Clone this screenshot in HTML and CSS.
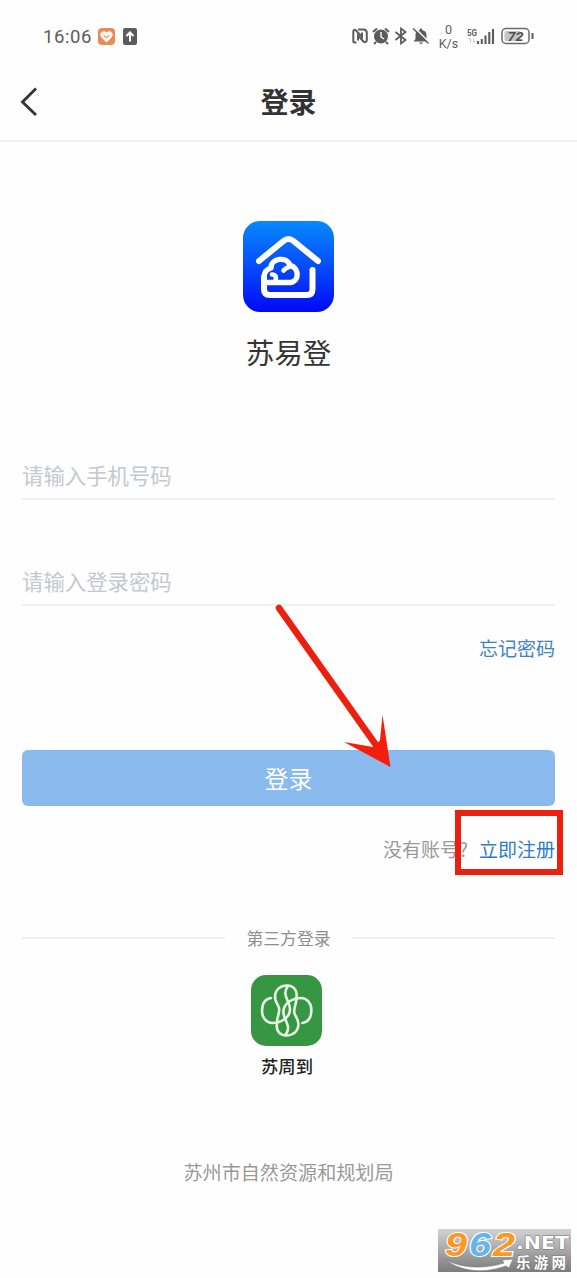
FILE: index.html
```html
<!DOCTYPE html>
<html lang="zh-CN">
<head>
<meta charset="utf-8">
<title>登录</title>
<link rel="stylesheet" href="styles.css">
</head>
<body>
<div class="screen">
  <div class="status">
    <span class="clock">16:06</span>
    <svg class="app-a" width="17" height="17" viewBox="0 0 17 17"><rect width="17" height="17" rx="4" fill="#e88b57"/><path d="M8.500 14.500 3.500 9.500C0 5.500 5 1.200 8.500 4.500 12 1.200 17 5.500 13.500 9.500Z" fill="#fff8ec"/><path d="m6 7.500 2.500 2.200L11 7.500" fill="none" stroke="#e8a070" stroke-width="1.200"/></svg>
    <svg class="app-b" width="14" height="17" viewBox="0 0 14 17"><rect width="14" height="17" rx="2" fill="#5c5c5c"/><path d="M7 13.500V4.500M3.500 8 7 4.500 10.500 8" fill="none" stroke="#fff" stroke-width="2"/></svg>
    <div class="indicators">
      <svg width="16" height="16" viewBox="0 0 16 16"><path d="M4.500 14.500H3C1.500 14.500 1.300 13.500 1.300 13V3.500C1.300 1.500 3 1.500 4 2.500L10 9V4.500" fill="none" stroke="#5c5c5c" stroke-width="2"/><path d="M6 1.500H11.500C14 1.500 14.800 3 14.800 5V12C14.800 14.500 12.500 14.500 11.500 13.500L6 7.500V12.500" fill="none" stroke="#5c5c5c" stroke-width="2"/></svg>
      <svg width="18" height="18" viewBox="0 0 18 18"><circle cx="9" cy="9.500" r="7" fill="#5c5c5c"/><path d="M1 5 5 1.500M17 5 13 1.500M4 15l-2 2M14 15l2 2" stroke="#5c5c5c" stroke-width="2"/><path d="M9 5v5l3 2" fill="none" stroke="#fff" stroke-width="1.400"/></svg>
      <svg width="14" height="18" viewBox="0 0 14 18"><path d="m1.500 5 10 8L7 16.500v-15L11.500 5l-10 8" fill="none" stroke="#5c5c5c" stroke-width="1.800"/></svg>
      <svg width="18" height="18" viewBox="0 0 18 18"><path d="M1.500 14.500 3.500 12V8c0-3 2-4.500 4.500-5V1.500h2V3c3 .5 4.500 2.500 4.500 5v4l2 2.500ZM7 15.500h4L9 17.500Z" fill="#5c5c5c"/><path d="m3 1 14 14" stroke="#fff" stroke-width="1.500"/><path d="m1 1.500 15.500 15" stroke="#5c5c5c" stroke-width="1.400"/></svg>
      <div class="speed"><span>0</span><span>K/s</span></div>
      <svg class="signal" width="29" height="19" viewBox="0 0 29 19"><text x="0" y="8.500" class="gen" textLength="10" lengthAdjust="spacingAndGlyphs">5G</text><path d="M3.500 11v5m-1.500-3 1.500-2M6.500 11v5l1.500-2" fill="none" stroke="#ccc"/><path d="M11 14v3M14.800 12v5M18.500 8.500v8.500M22.300 5v12M26 2v15" stroke="#5c5c5c" stroke-width="2.100"/></svg>
      <svg class="battery" width="34" height="18" viewBox="0 0 34 18"><rect x="1" y="1.500" width="27" height="15" rx="4" fill="#fff" stroke="#6a6a6a" stroke-width="1.500"/><rect x="3.500" y="4" width="16" height="10" rx="1.500" fill="#c5c5c5"/><path d="M31.500 6v6" stroke="#5c5c5c" stroke-width="2"/><text x="14.500" y="13.500" text-anchor="middle" class="level" textLength="16" lengthAdjust="spacingAndGlyphs">72</text></svg>
    </div>
  </div>

  <div class="nav">
    <svg class="back" width="18" height="30" viewBox="0 0 18 30"><path d="M16 2.500 2.500 16 16 29" fill="none" stroke="#333" stroke-width="2.800"/></svg>
    <h1 class="title">登录</h1>
  </div>

  <div class="brand">
    <svg width="91" height="91" viewBox="0 0 91 91">
      <defs><linearGradient id="blue" x2="0" y2="1"><stop stop-color="#0789fe"/><stop offset=".5" stop-color="#064cfb"/><stop offset="1" stop-color="#0208f4"/></linearGradient></defs>
      <rect width="91" height="91" rx="17" fill="url(#blue)"/>
      <g fill="none" stroke="#fff" stroke-width="6" stroke-linecap="round" stroke-linejoin="round">
        <path d="M16 40 40.500 20Q45.500 16 50.500 20L75 40"/>
        <path d="M69.500 49V68Q69.500 74 64 74H27Q21 74 21 68V56"/>
        <path d="M21 57C21 51 24 48 28 47 28 37 44 35 47 44.500 56 46 57 60 47.500 61.500H24" stroke-width="5.400"/>
        <path d="M29 53.500C33 53.500 34 57 32 60M40.500 49.500Q42.500 47 46 46" stroke-width="4.600"/>
      </g>
    </svg>
    <div class="brand-name">苏易登</div>
  </div>

  <div class="form">
    <div class="field phone">请输入手机号码</div>
    <div class="field password">请输入登录密码</div>
    <div class="forgot">忘记密码</div>
    <div class="submit">登录</div>
    <div class="register"><span class="ask">没有账号?</span><span class="link">立即注册</span></div>
    <div class="divider"><span>第三方登录</span></div>
  </div>

  <div class="partner">
    <svg width="71" height="71" viewBox="0 0 71 71">
      <defs>
        <g id="petal" fill="none" stroke="#e4f8e4" stroke-width="2.600" stroke-linecap="round">
          <path d="M20 23C14 24 11 29 11 36 11 43 16 48 21 48 31 48 39 42 39 34 39 26 30 20 37 11"/>
          <path d="M26 47C26 42 29 38 28 33 27 29 24 27 24 22 24 15 29 10.500 36 10.500 43 10.500 46.500 16 45.500 22"/>
        </g>
      </defs>
      <rect width="71" height="71" rx="15" fill="#369641"/>
      <use href="#petal"/>
      <use href="#petal" transform="rotate(180 35.700 35.500)"/>
    </svg>
    <div class="partner-name">苏周到</div>
  </div>
  <div class="owner">苏州市自然资源和规划局</div>

  <svg class="pointer" width="120" height="168" viewBox="0 0 120 168"><path d="m6 6 97 137" stroke="#ed2010" stroke-width="6.500" stroke-linecap="round"/><path d="M117.500 165 71 140 100 145 107 138.500 109.500 113Z" fill="#f51d0c"/></svg>
  <div class="highlight"></div>
  <div class="watermark">
    <svg width="133" height="43" viewBox="0 0 133 43">
      <defs><linearGradient id="gray" x2="0" y2="1"><stop stop-color="#d2d2d2"/><stop offset="1" stop-color="#7c7c7c"/></linearGradient></defs>
      <rect width="133" height="43" fill="url(#gray)"/>
      <g class="digits"><text x="7" y="27" textLength="22" lengthAdjust="spacingAndGlyphs" fill="#ff9720">9</text><text x="31" y="27" textLength="22" lengthAdjust="spacingAndGlyphs" fill="#63b6e9">6</text><text x="55" y="27" textLength="22" lengthAdjust="spacingAndGlyphs" fill="#ff9720">2</text></g>
      <text x="78" y="20" class="net" textLength="53" lengthAdjust="spacingAndGlyphs">.NET</text>
      <text x="78" y="38.500" class="site" textLength="50">乐游网</text>
      <path d="M7 30C24 40 46 40 66 34L64 31 75 30 71 39 68 37C46 45 22 43 7 30Z" fill="#fff" stroke="#777" stroke-width=".6"/>
    </svg>
  </div>
</div>
</body>
</html>
```
FILE: styles.css
```css
* { box-sizing: border-box; }
body {
  margin: 0;
  background: #fefefe;
  font-family: "Noto Sans CJK SC", sans-serif;
  color: #333;
}
.screen {
  position: relative;
  display: flex;
  flex-direction: column;
  width: 577px;
  height: 1278px;
  overflow: hidden;
}
svg { display: block; flex: none; overflow: visible; }

.status {
  display: flex;
  align-items: center;
  height: 72px;
  padding: 0 42px 0 43px;
  color: #5c5c5c;
}
.clock {
  width: 49px;
  font: 18.5px/24px Roboto, sans-serif;
  letter-spacing: 0.6px;
  padding-top: 1px;
}
.app-a { margin-left: 6px; }
.app-b { margin-left: 8px; }
.indicators {
  display: flex;
  align-items: center;
  gap: 4px;
  margin-left: auto;
}
.speed {
  display: flex;
  flex-direction: column;
  align-items: center;
  width: 23px;
  margin-left: 3px;
  padding-top: 1px;
  font: 12.5px/14px Roboto, sans-serif;
}
.signal { margin-left: 3px; }
.gen { font: bold 9px Roboto, sans-serif; fill: #5c5c5c; }
.level { font: italic bold 13px Roboto, sans-serif; fill: #505050; }
.battery { margin-left: 1px; }

.nav {
  display: grid;
  grid-template-columns: 40px 1fr 40px;
  align-items: center;
  height: 70px;
  padding: 0 20px 10px;
  border-bottom: 2px solid #f1f1f1;
}
.title {
  margin: 0;
  text-align: center;
  font-size: 28px;
  line-height: 40px;
  font-weight: 700;
}

.brand {
  display: flex;
  flex-direction: column;
  align-items: center;
  padding-top: 79px;
}
.brand-name {
  margin-top: 19px;
  font-size: 28.5px;
  line-height: 42px;
}

.form { padding: 0 22px; }
.field {
  color: #c3c9cf;
  font-size: 21.4px;
  line-height: 32px;
  border-bottom: 2px solid #f0f0f0;
}
.phone { height: 41px; margin-top: 86px; }
.password { height: 41px; margin-top: 65px; }
.forgot {
  margin-top: 28px;
  text-align: right;
  color: #4083c6;
  font-size: 19px;
  line-height: 28px;
}
.submit {
  height: 56px;
  margin-top: 88px;
  border-radius: 6px;
  background: #89b9ed;
  color: #fff;
  text-align: center;
  font-size: 24px;
  line-height: 55px;
}
.register {
  display: flex;
  justify-content: flex-end;
  gap: 11px;
  margin-top: 29px;
  font-size: 19px;
  line-height: 28px;
}
.ask { color: #999; }
.link { color: #2d7ccd; }
.divider {
  display: flex;
  align-items: center;
  gap: 22px;
  margin-top: 63px;
  color: #8e8e8e;
  font-size: 16.8px;
  line-height: 24px;
}
.divider::before, .divider::after {
  content: "";
  flex: 1;
  height: 2px;
  background: #efefef;
}

.partner {
  display: flex;
  flex-direction: column;
  align-items: center;
  margin-top: 25px;
  padding-right: 4px;
}
.partner-name {
  margin: 7px 0 0 1px;
  color: #222;
  font-size: 17.3px;
  line-height: 26px;
  font-weight: 500;
}
.owner {
  margin-top: 79px;
  text-align: center;
  color: #999;
  font-size: 19.1px;
  line-height: 28px;
}

/* Annotations over the form */
.pointer { position: absolute; left: 273px; top: 602px; }
.highlight {
  position: absolute;
  left: 455px;
  top: 810px;
  width: 108px;
  height: 65px;
  border: 6px solid #eb2010;
}
.watermark { position: absolute; left: 438px; top: 1229px; }
.digits {
  font: italic bold 33px "Liberation Sans", sans-serif;
  stroke: #fff;
  stroke-width: 2px;
  paint-order: stroke;
}
.net, .site {
  fill: #fff;
  stroke: #777;
  stroke-width: 1px;
  paint-order: stroke;
}
.net { font: bold 18px "DejaVu Sans", sans-serif; }
.site { font: bold 14.5px "Noto Sans CJK SC", sans-serif; }
```
